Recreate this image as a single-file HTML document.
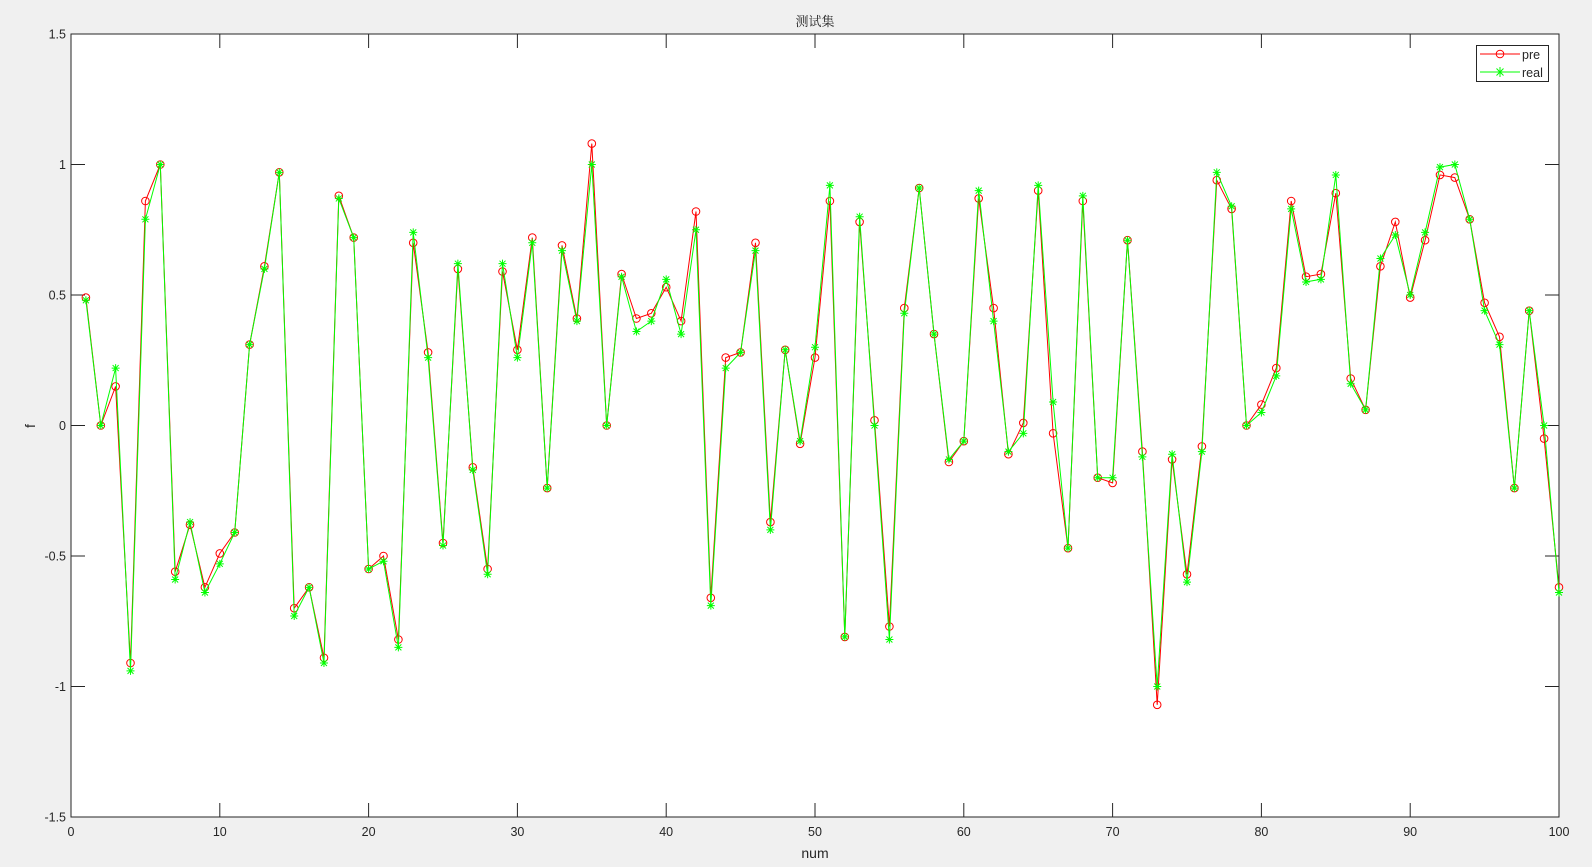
<!DOCTYPE html>
<html><head><meta charset="utf-8"><style>
html,body{margin:0;padding:0;background:#f0f0f0;width:1592px;height:867px;overflow:hidden}
svg{display:block}
text{font-family:"Liberation Sans",sans-serif;font-size:12.5px;fill:#262626}
</style></head><body>
<svg id="s" width="1592" height="867" xmlns="http://www.w3.org/2000/svg">
<rect x="71" y="34" width="1488" height="783" fill="#fff" stroke="#262626" stroke-width="1"/>
<g id="ax"></g>
<g id="data"></g>
<text x="815" y="26" text-anchor="middle" style="font-family:'Noto Serif CJK SC','WenQuanYi Zen Hei',serif;font-size:13px">测试集</text>
<text x="815" y="858" text-anchor="middle" style="font-size:14px">num</text>
<text x="0" y="0" text-anchor="middle" transform="translate(35,426) rotate(-90)" style="font-size:14px">f</text>
<rect x="1476.5" y="45.5" width="72" height="36" fill="#fff" stroke="#262626"/>
<line x1="1480" y1="54" x2="1520" y2="54" stroke="#f00"/>
<circle cx="1500" cy="54" r="3.8" fill="none" stroke="#f00"/>
<text x="1522" y="59">pre</text>
<line x1="1480" y1="72" x2="1520" y2="72" stroke="#0f0"/>
<path d="M1495,72h10M1500,67v10M1496.5,68.5l7,7M1503.5,68.5l-7,7" stroke="#0f0"/>
<text x="1522" y="77">real</text>
</svg>
<script>
var pre=[0.49,0,0.15,-0.91,0.86,1.0,-0.56,-0.38,-0.62,-0.49,-0.41,0.31,0.61,0.97,-0.70,-0.62,-0.89,0.88,0.72,-0.55,-0.50,-0.82,0.70,0.28,-0.45,0.60,-0.16,-0.55,0.59,0.29,0.72,-0.24,0.69,0.41,1.08,0,0.58,0.41,0.43,0.53,0.40,0.82,-0.66,0.26,0.28,0.70,-0.37,0.29,-0.07,0.26,0.86,-0.81,0.78,0.02,-0.77,0.45,0.91,0.35,-0.14,-0.06,0.87,0.45,-0.11,0.01,0.90,-0.03,-0.47,0.86,-0.20,-0.22,0.71,-0.10,-1.07,-0.13,-0.57,-0.08,0.94,0.83,0.0,0.08,0.22,0.86,0.57,0.58,0.89,0.18,0.06,0.61,0.78,0.49,0.71,0.96,0.95,0.79,0.47,0.34,-0.24,0.44,-0.05,-0.62];
var real=[0.48,0,0.22,-0.94,0.79,1.0,-0.59,-0.37,-0.64,-0.53,-0.41,0.31,0.60,0.97,-0.73,-0.62,-0.91,0.87,0.72,-0.55,-0.52,-0.85,0.74,0.26,-0.46,0.62,-0.17,-0.57,0.62,0.26,0.70,-0.24,0.67,0.40,1.0,0,0.57,0.36,0.40,0.56,0.35,0.75,-0.69,0.22,0.28,0.67,-0.40,0.29,-0.06,0.30,0.92,-0.81,0.80,0.0,-0.82,0.43,0.91,0.35,-0.13,-0.06,0.90,0.40,-0.10,-0.03,0.92,0.09,-0.47,0.88,-0.20,-0.20,0.71,-0.12,-1.0,-0.11,-0.60,-0.10,0.97,0.84,0.0,0.05,0.19,0.83,0.55,0.56,0.96,0.16,0.06,0.64,0.73,0.50,0.74,0.99,1.0,0.79,0.44,0.31,-0.24,0.44,0.0,-0.64];
function X(i){return 71+i*14.88}
function Y(v){return 425.5-v*261}
var ax='';
for(var i=0;i<=10;i++){var x=X(i*10);
 ax+='<line x1="'+x+'" y1="817" x2="'+x+'" y2="803" stroke="#262626"/><line x1="'+x+'" y1="34" x2="'+x+'" y2="48" stroke="#262626"/>';
 ax+='<text x="'+x+'" y="836" text-anchor="middle">'+(i*10)+'</text>';}
var yl=['-1.5','-1','-0.5','0','0.5','1','1.5'];
for(var j=0;j<7;j++){var v=-1.5+j*0.5,y=Y(v);
 ax+='<line x1="71" y1="'+y+'" x2="85" y2="'+y+'" stroke="#262626"/><line x1="1559" y1="'+y+'" x2="1545" y2="'+y+'" stroke="#262626"/>';
 ax+='<text x="66" y="'+(y+4.5)+'" text-anchor="end">'+yl[j]+'</text>';}
document.getElementById('ax').innerHTML=ax;
var d='',p1='',p2='';
for(var i=0;i<100;i++){p1+=(i?'L':'M')+X(i+1).toFixed(1)+','+Y(pre[i]).toFixed(1);p2+=(i?'L':'M')+X(i+1).toFixed(1)+','+Y(real[i]).toFixed(1);}
d+='<path d="'+p1+'" fill="none" stroke="#f00"/>';
for(var i=0;i<100;i++)d+='<circle cx="'+X(i+1).toFixed(1)+'" cy="'+Y(pre[i]).toFixed(1)+'" r="3.8" fill="none" stroke="#f00"/>';
d+='<path d="'+p2+'" fill="none" stroke="#0f0"/>';
for(var i=0;i<100;i++){var x=X(i+1),y=Y(real[i]);
 d+='<path d="M'+(x-4)+','+y+'h8M'+x+','+(y-4)+'v8M'+(x-3)+','+(y-3)+'l6,6M'+(x+3)+','+(y-3)+'l-6,6" stroke="#0f0"/>';}
document.getElementById('data').innerHTML=d;
</script>
</body></html>
